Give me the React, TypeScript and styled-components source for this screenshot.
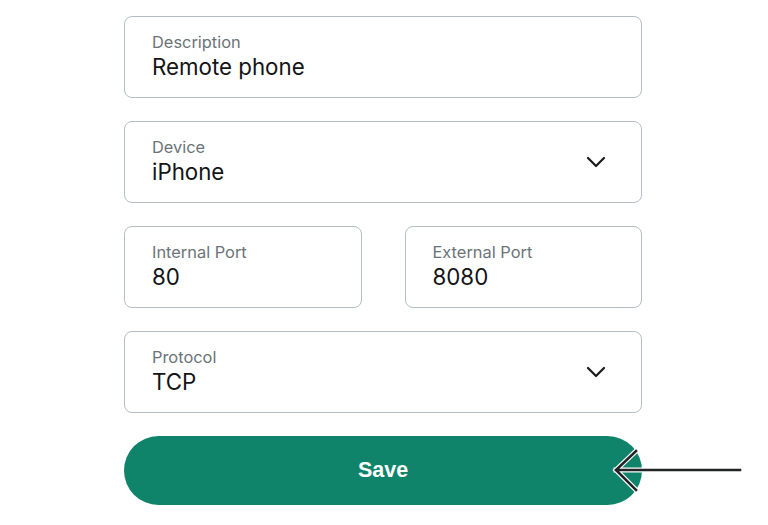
import styled, { createGlobalStyle } from 'styled-components'

const Global = createGlobalStyle`
  body {
    margin: 0;
    background: #ffffff;
    font-family: Inter, "Noto Sans", sans-serif;
  }
`

const Page = styled.div`
  width: 518px;
  padding: 16px 0 0 124px;
  display: flex;
  flex-direction: column;
  gap: 23px;
`

const Row = styled.div`
  display: grid;
  grid-template-columns: 1fr 1fr;
  gap: 43px;
`

const Field = styled.div`
  box-sizing: border-box;
  height: 82px;
  border: 1.5px solid #b6bdc4;
  border-radius: 8px;
  padding: 0 35px 0 27px;
  display: flex;
  align-items: center;
  justify-content: space-between;
`

const Texts = styled.div`
  display: flex;
  flex-direction: column;
  margin-top: -1px;
`

const Label = styled.span`
  font-size: 16.4px;
  line-height: 20px;
  color: #6b7378;
`

const Value = styled.span`
  font-size: 22.3px;
  line-height: 29px;
  color: #121416;
`

const ButtonWrap = styled.div`
  position: relative;
`

const SaveButton = styled.button`
  display: block;
  width: 100%;
  height: 69px;
  border: none;
  border-radius: 35px;
  background: #10846a;
  color: #ffffff;
  font-family: "Liberation Sans", Arial, sans-serif;
  font-weight: 700;
  font-size: 21.5px;
  cursor: pointer;
`

const Pointer = styled.svg`
  position: absolute;
  left: 488px;
  top: 12px;
  overflow: visible;
`

function Chevron() {
  return (
    <svg width="20" height="12" viewBox="0 0 20 12" fill="none">
      <path d="M2 2l8 8 8-8" stroke="#1a1a1a" strokeWidth="2.2" strokeLinecap="round" strokeLinejoin="round" />
    </svg>
  )
}

function TextField({ label, value, select }: { label: string; value: string; select?: boolean }) {
  return (
    <Field>
      <Texts>
        <Label>{label}</Label>
        <Value>{value}</Value>
      </Texts>
      {select && <Chevron />}
    </Field>
  )
}

export default function App() {
  return (
    <>
      <Global />
      <Page>
        <TextField label="Description" value="Remote phone" />
        <TextField label="Device" value="iPhone" select />
        <Row>
          <TextField label="Internal Port" value="80" />
          <TextField label="External Port" value="8080" />
        </Row>
        <TextField label="Protocol" value="TCP" select />
        <ButtonWrap>
          <SaveButton>Save</SaveButton>
          <Pointer width="130" height="44" viewBox="0 0 130 44">
            <g fill="none" strokeLinecap="square">
              <path d="M4 22H128M24 3L4 22l20 20" stroke="#ffffff" strokeWidth="5" />
              <path d="M4 22H128M24 3L4 22l20 20" stroke="#222426" strokeWidth="2.6" />
            </g>
          </Pointer>
        </ButtonWrap>
      </Page>
    </>
  )
}
